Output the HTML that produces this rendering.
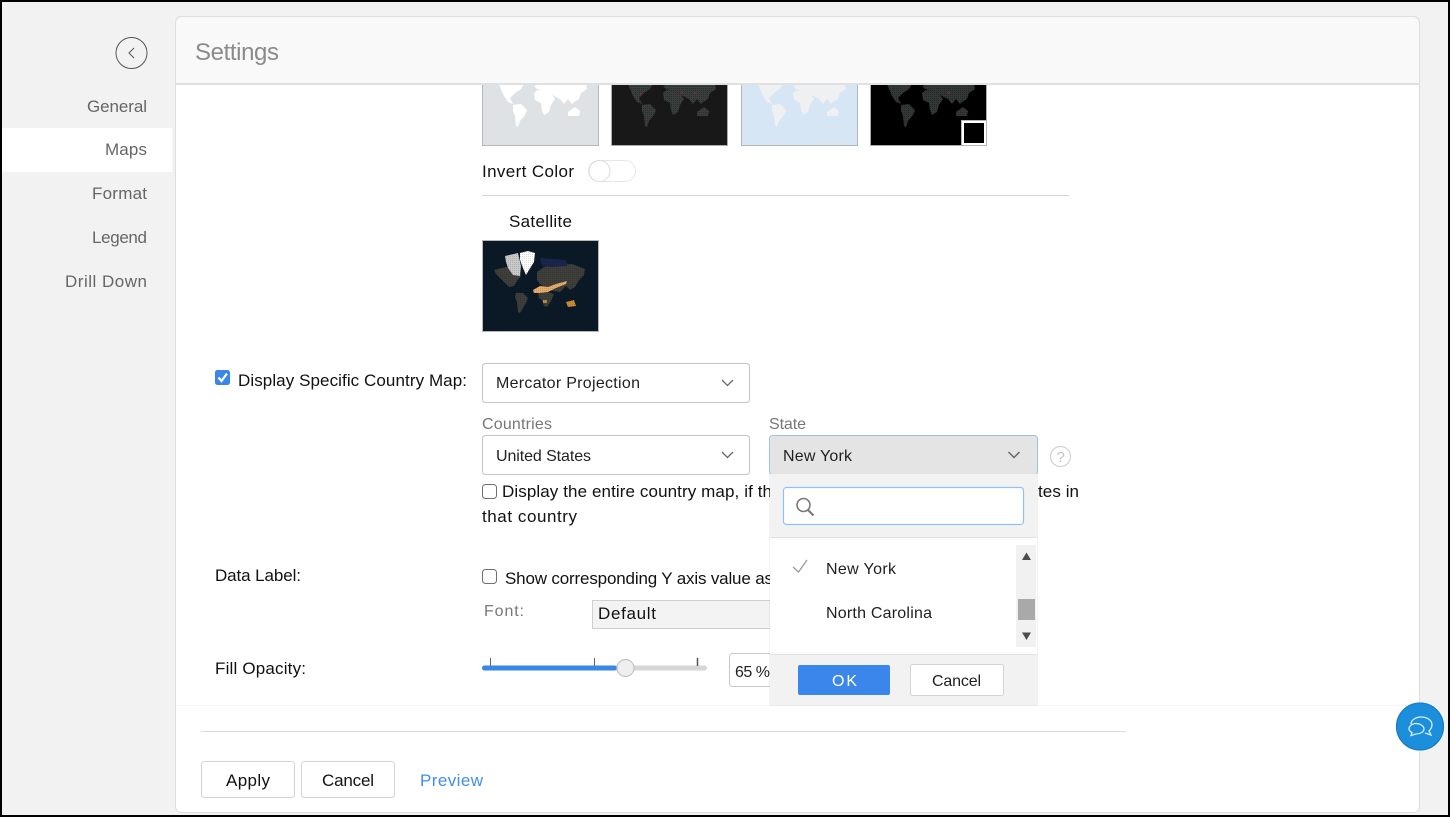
<!DOCTYPE html>
<html lang="en">
<head>
<meta charset="utf-8">
<title>Settings</title>
<style>
html,body{margin:0;padding:0;width:1450px;height:817px;overflow:hidden;background:#000}
svg{display:block}
text{font-family:"Liberation Sans",sans-serif;font-size:17px;fill:#111}
.nav{font-size:17px;fill:#666}
.sm{font-size:16px;fill:#1f1f1f}
.lbl{font-size:16px;fill:#777}
</style>
</head>
<body>
<svg width="1450" height="817" viewBox="0 0 1450 817" xmlns="http://www.w3.org/2000/svg">
<defs>
  <g id="land">
    <path d="M17 0L42 0L39 5L33 9L28 14L31 20L26 18L22 12L19 5Z"/>
    <path d="M31 21L39 20L45 26L43 31L38 37L36 43L34 42L33 32L31 27Z"/>
    <path d="M52 9L56 6L66 7L70 11L73 15L69 21L67 28L62 31L60 26L59 19L53 16Z"/>
    <path d="M52 2L58 0L104 0L105 5L99 9L97 15L92 18L90 20L86 15L82 20L78 15L72 12L62 7L55 5Z"/>
    <path d="M86 28L93 23L98 27L97 32L90 32L86 32Z"/>
  </g>
  <pattern id="dots" width="2" height="2" patternUnits="userSpaceOnUse"><rect width="1" height="1" fill="#000" opacity=".28"/></pattern>
</defs>

<!-- frame + page -->
<rect x="0" y="0" width="1450" height="817" fill="#000"/>
<rect x="2" y="2" width="1446" height="813" fill="#f2f2f2"/>

<!-- sidebar -->
<circle cx="131.500" cy="53" r="15.500" fill="none" stroke="#555" stroke-width="1"/>
<path d="M134 48L129 53L134 58" fill="none" stroke="#555" stroke-width="1"/>
<rect x="2" y="128" width="170" height="44" fill="#fff"/>
<text class="nav" x="87" y="112" textLength="60">General</text>
<text class="nav" x="105" y="155" textLength="42">Maps</text>
<text class="nav" x="92" y="199" textLength="55">Format</text>
<text class="nav" x="92" y="243" textLength="55">Legend</text>
<text class="nav" x="65" y="287" textLength="82">Drill Down</text>

<!-- panel -->
<rect x="175.500" y="16.500" width="1244" height="796" rx="6" fill="#fff" stroke="#dedede"/>
<line x1="176" y1="705.500" x2="1419" y2="705.500" stroke="#f6f6f6"/>

<!-- map thumbnails -->
<g transform="translate(482,84)">
  <rect x=".5" y="0" width="116" height="61.500" fill="#dfe2e5" stroke="#b5b8ba"/>
  <use href="#land" fill="#fff"/>
</g>
<g transform="translate(611,84)">
  <rect x=".5" y="0" width="116" height="61.500" fill="#181818" stroke="#a9acae"/>
  <use href="#land" fill="#3a3f3d"/><use href="#land" fill="url(#dots)"/>
  <rect x="29" y="9" width="1.500" height="1.500" fill="#a22"/><rect x="70" y="8" width="1.500" height="1.500" fill="#a22"/><rect x="83" y="8" width="1.500" height="1.500" fill="#a22"/>
</g>
<g transform="translate(741,84)">
  <rect x=".5" y="0" width="116" height="61.500" fill="#d6e6f5" stroke="#b0b6bb"/>
  <use href="#land" fill="#eef0f2"/>
</g>
<g transform="translate(870,84)">
  <rect x=".5" y="0" width="116" height="61.500" fill="#000" stroke="#a9acae"/>
  <use href="#land" fill="#333735"/><use href="#land" fill="url(#dots)"/>
  <rect x="78" y="8" width="1.500" height="1.500" fill="#a22"/>
</g>
<rect x="961" y="120" width="26" height="26" fill="#b5b8ba"/>
<rect x="962" y="121" width="24" height="24" fill="#fff"/>
<rect x="964" y="123" width="20" height="20" fill="#000"/>

<!-- invert -->
<text x="482" y="177" textLength="92">Invert Color</text>
<rect x="588.500" y="160.500" width="47" height="21" rx="10.500" fill="#fff" stroke="#e6e6e6"/>
<circle cx="599.500" cy="171" r="10.500" fill="#fff" stroke="#dcdcdc"/>
<line x1="482" y1="195.500" x2="1069" y2="195.500" stroke="#d4d4d4"/>

<!-- satellite -->
<text x="509" y="227" textLength="63">Satellite</text>
<g transform="translate(482,240)">
  <rect x=".5" y=".5" width="116" height="91" fill="#0b1a26" stroke="#b5b8ba"/>
  <path d="M12 30L24 27L36 28L39 36L35 41L32 46L27 47L20 40L14 34Z" fill="#3e3f3a"/>
  <path d="M34 53L41 53L46 58L44 63L41 68L38 73L36 72L35 62L33 57Z" fill="#3e3f3a"/>
  <path d="M55 32L62 27L75 25L90 24L103 29L102 35L97 40L93 47L88 50L84 46L78 52L66 50L58 44L55 40Z" fill="#3e3f3a"/>
  <path d="M56 53L66 52L72 54L69 61L65 67L62 66L60 60L57 58Z" fill="#3e3f3a"/>
  <path d="M58 18L70 19L84 20L85 26L70 27L60 26Z" fill="#1c2550"/>
  <path d="M23 16L36 13L39 26L38 36L31 35L26 28L24 22Z" fill="#c9c9c9"/>
  <path d="M38 13L46 11L53 13L52 22L47 30L44 35L41 28L38 20Z" fill="#fff"/>
  <path d="M51 50L58 46L66 47L74 44L85 41L84 44L74 48L66 52L58 53L52 53Z" fill="#e6ad6c"/>
  <path d="M84 62L92 60L94 66L86 67Z" fill="#c98b35"/>
  <rect x="61" y="60" width="4" height="3" fill="#b98b45"/>
</g>
<rect x="483" y="241" width="115" height="90" fill="url(#dots)" opacity=".5"/>

<!-- display specific -->
<rect x="215" y="370" width="15" height="15" rx="2.500" fill="#3a86ea"/>
<path d="M218.500 377.500L221.500 381L227 373.500" fill="none" stroke="#fff" stroke-width="2.200"/>
<text x="238" y="386" textLength="229">Display Specific Country Map:</text>

<rect x="482.500" y="363.500" width="267" height="39" rx="3" fill="#fff" stroke="#c4c4c4"/>
<text class="sm" x="496" y="388" textLength="144">Mercator Projection</text>
<path d="M722 380L727.500 385.500L733 380" fill="none" stroke="#666" stroke-width="1.300"/>

<text class="lbl" x="482" y="429" textLength="70">Countries</text>
<text class="lbl" x="769" y="429" textLength="37">State</text>

<rect x="482.500" y="435.500" width="267" height="39" rx="3" fill="#fff" stroke="#c4c4c4"/>
<text class="sm" x="496" y="461" textLength="95">United States</text>
<path d="M722 452L727.500 457.500L733 452" fill="none" stroke="#666" stroke-width="1.300"/>

<circle cx="1060.500" cy="456.500" r="10" fill="#fff" stroke="#d2d2d2" stroke-width="1.200"/>
<text x="1056.500" y="462" textLength="8" style="font-size:15px;fill:#c4c4c4">?</text>

<rect x="482.500" y="484.500" width="14" height="14" rx="3" fill="#fff" stroke="#6f6f6f"/>
<text x="502" y="497" textLength="270">Display the entire country map, if th</text>
<text x="1038" y="497" textLength="41">tes in</text>
<text x="482" y="522" textLength="95">that country</text>

<!-- data label -->
<text x="215" y="581" textLength="86">Data Label:</text>
<rect x="482.500" y="569.500" width="14" height="14" rx="3" fill="#fff" stroke="#6f6f6f"/>
<text x="505" y="584" textLength="268">Show corresponding Y axis value as</text>
<text class="lbl" x="484" y="616" textLength="40">Font:</text>
<rect x="592.500" y="600.500" width="190" height="28" fill="#f3f3f3" stroke="#cfcfcf"/>
<text x="598" y="619" textLength="58">Default</text>

<!-- fill opacity -->
<text x="215" y="674" textLength="91">Fill Opacity:</text>
<rect x="482" y="665.500" width="225" height="5" rx="2.500" fill="#d6d6d6"/>
<rect x="482" y="665.500" width="135" height="5" rx="2.500" fill="#3a86ea"/>
<line x1="490.500" y1="658" x2="490.500" y2="666" stroke="#666"/>
<line x1="594.500" y1="658" x2="594.500" y2="666" stroke="#666"/>
<line x1="697.500" y1="658" x2="697.500" y2="666" stroke="#555" stroke-width="1.500"/>
<circle cx="625.500" cy="668" r="8.500" fill="#efefef" stroke="#c2c2c2" stroke-width="1.200"/>
<rect x="729.500" y="653.500" width="60" height="33" rx="3" fill="#fff" stroke="#c8c8c8"/>
<text class="sm" x="735" y="677" textLength="35">65 %</text>

<!-- state select -->
<rect x="769.500" y="435.500" width="268" height="39" rx="3" fill="#e4e4e4" stroke="#9cc4ea"/>
<text class="sm" x="783" y="461" textLength="69">New York</text>
<path d="M1008.500 452L1014 457.500L1019.500 452" fill="none" stroke="#666" stroke-width="1.500"/>

<!-- dropdown -->
<rect x="769" y="474" width="269" height="232" fill="#000" opacity=".05"/>
<rect x="770" y="474" width="267" height="231" fill="#f2f2f2"/>
<rect x="783.500" y="487.500" width="240" height="37" rx="3" fill="#fff" stroke="#8fc2f0" stroke-width="1.200"/>
<circle cx="803.500" cy="505" r="6.500" fill="none" stroke="#777" stroke-width="1.600"/>
<line x1="808" y1="510" x2="813.500" y2="515.500" stroke="#777" stroke-width="2"/>
<rect x="770" y="537" width="267" height="118" fill="#fff"/>
<line x1="770" y1="537.500" x2="1037" y2="537.500" stroke="#e2e2e2"/>
<line x1="770" y1="654.500" x2="1037" y2="654.500" stroke="#e2e2e2"/>
<path d="M793 567L798.500 572L807 560" fill="none" stroke="#999" stroke-width="1.300"/>
<text class="sm" x="826" y="574" textLength="70">New York</text>
<text class="sm" x="826" y="618" textLength="106">North Carolina</text>
<rect x="1016" y="545" width="20" height="102" fill="#f1f1f1"/>
<path d="M1022 560L1026.500 552.500L1031 560Z" fill="#4a4f4d"/>
<path d="M1022 632.500L1026.500 640L1031 632.500Z" fill="#4a4f4d"/>
<rect x="1018" y="599" width="17" height="21" fill="#a9a9a9"/>
<rect x="798" y="665" width="92" height="30" rx="2" fill="#3a86ea"/>
<text x="832" y="686" textLength="25" style="fill:#fff;font-size:16px">OK</text>
<rect x="910.500" y="664.500" width="93" height="31" rx="2" fill="#fff" stroke="#d4d4d4"/>
<text class="sm" x="932" y="686" textLength="49">Cancel</text>

<!-- header -->
<path d="M176 84V23a6 6 0 0 1 6-6H1413a6 6 0 0 1 6 6V84Z" fill="#f9f9f9"/>
<path d="M175.500 84V23a6.500 6.500 0 0 1 6.500-6.500H1413a6.500 6.500 0 0 1 6.500 6.500V84" fill="none" stroke="#dedede"/>
<rect x="176" y="83" width="1243" height="2" fill="#e0e0e0"/>
<text x="195" y="60" textLength="84" style="font-size:24px;fill:#8b8b8b">Settings</text>

<!-- footer -->
<line x1="201" y1="731.500" x2="1126" y2="731.500" stroke="#dcdcdc"/>
<rect x="201.500" y="761.500" width="93" height="36" rx="3" fill="#fff" stroke="#d4d4d4"/>
<text x="226" y="786" textLength="44">Apply</text>
<rect x="301.500" y="761.500" width="93" height="36" rx="3" fill="#fff" stroke="#d4d4d4"/>
<text x="322" y="786" textLength="52">Cancel</text>
<text x="420" y="786" textLength="63" style="fill:#3f8ee8">Preview</text>

<!-- chat -->
<circle cx="1420" cy="726.500" r="24" fill="#1b8fdc"/>
<circle cx="1420" cy="726.500" r="23.500" fill="none" stroke="#1478bd"/>
<path d="M1411 724C1411 720 1416 717 1421 717C1427 717 1432 720 1432 725C1432 728 1430 730 1429 731L1431 735L1425 733" fill="none" stroke="#d8eefb" stroke-width="1.300"/>
<path d="M1416 723.500C1420 723.500 1424 726 1424 729C1424 732 1420 734 1416 734L1411 735.500L1412 732.500C1410 731.500 1409 730.500 1409 729C1409 726 1412 723.500 1416 723.500Z" fill="#1b8fdc" stroke="#d8eefb" stroke-width="1.300"/>
</svg>
</body>
</html>
